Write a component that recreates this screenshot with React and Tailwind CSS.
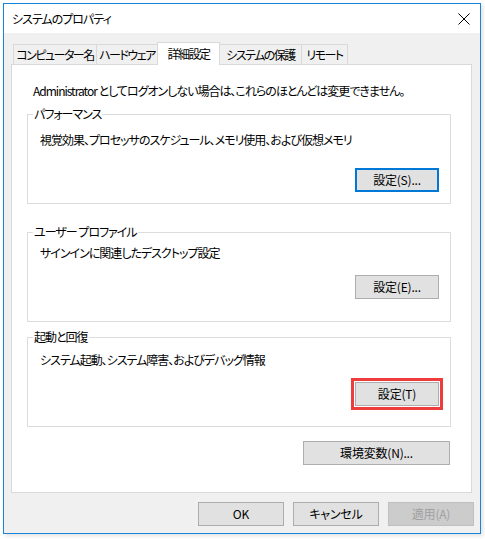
import React from 'react';

const font = "font-['Noto_Sans_CJK_JP','Noto_Sans',sans-serif] [font-feature-settings:'palt'] tracking-[-1px]";

const Button = ({ children, className = '', variant = 'normal' }) => {
  const styles =
    variant === 'default'
      ? 'border-2 border-[#0078d7] bg-[#e1e1e1] text-black'
      : variant === 'disabled'
      ? 'border border-[#bfbfbf] bg-[#cccccc] text-[#a0a0a0]'
      : 'border border-[#adadad] bg-[#e1e1e1] text-black';
  return (
    <div
      className={`flex h-[24px] items-center justify-center whitespace-nowrap text-[12px] leading-none tracking-[-0.2px] ${styles} ${className}`}
    >
      {children}
    </div>
  );
};

const Group = ({ label, text, children, className = '', textPad = 'pt-[17px]', btnGap = 'mt-[20px]' }) => (
  <div className={`relative ml-[15px] flex h-[90px] w-[424px] flex-col border border-[#dcdcdc] ${textPad} ${className}`}>
    {/* label sits on the top border */}
    <span className="absolute left-[5px] top-[-9px] bg-white px-[1px] text-[12px] leading-[16px]">{label}</span>
    <p className="pl-[12px] text-[12px] leading-[16px]">{text}</p>
    <div className={`flex justify-end pr-[11px] ${btnGap}`}>{children}</div>
  </div>
);

const tabs = [
  { name: 'コンピューター名', w: 'w-[84px]' },
  { name: 'ハードウェア', w: 'w-[62px]' },
  { name: '詳細設定', w: 'w-[63px]', active: true },
  { name: 'システムの保護', w: 'w-[83px]' },
  { name: 'リモート', w: 'w-[47px]' },
];

export default function App() {
  return (
    <div className={`h-[539px] w-[485px] bg-white pl-[3px] pt-[3px] text-black ${font}`}>
      <div className="flex h-[531px] w-[478px] flex-col border border-[#1883d7] shadow-[2px_2px_4px_rgba(0,0,0,0.12)]">
        {/* Title bar */}
        <div className="flex h-[29px] items-center justify-between bg-white pl-[8px] pr-[9px]">
          <span className="text-[12px] leading-none">システムのプロパティ</span>
          <svg width="12" height="12" viewBox="0 0 12 12" className="mr-[1px]">
            <path d="M0.5 0.5 L11.5 11.5 M11.5 0.5 L0.5 11.5" stroke="#000" strokeWidth="1" fill="none" />
          </svg>
        </div>

        {/* Body */}
        <div className="flex flex-1 flex-col bg-[#f0f0f0] pt-[9px]">
          {/* Tabs */}
          <div className="ml-[7px] flex h-[22px] items-end pl-[2px]">
            {tabs.map((t, i) => (
              <div
                key={t.name}
                className={`flex items-center justify-center whitespace-nowrap border border-b-0 border-[#d9d9d9] text-[12px] leading-none tracking-[-1.5px] ${t.w} ${
                  i > 0 ? '-ml-px' : ''
                } ${t.active ? 'relative z-10 mb-[-1px] h-[23px] bg-white' : 'h-[20px] bg-[#f0f0f0]'}`}
              >
                {t.name}
              </div>
            ))}
          </div>

          {/* Panel */}
          <div className="ml-[7px] flex h-[429px] w-[461px] flex-col border border-[#d9d9d9] bg-white">
            <p className="mt-[18px] pl-[21px] text-[12px] leading-[16px]">
              Administrator としてログオンしない場合は、これらのほとんどは変更できません。
            </p>

            <Group
              label="パフォーマンス"
              text="視覚効果、プロセッサのスケジュール、メモリ使用、および仮想メモリ"
              className="mt-[15px]"
            >
              <Button variant="default" className="w-[84px]">設定(S)...</Button>
            </Group>

            <Group
              label="ユーザー プロファイル"
              text="サインインに関連したデスクトップ設定"
              className="mt-[28px]"
              textPad="pt-[12px]"
              btnGap="mt-[14px]"
            >
              <Button className="w-[84px]">設定(E)...</Button>
            </Group>

            <Group
              label="起動と回復"
              text="システム起動、システム障害、およびデバッグ情報"
              className="mt-[15px]"
              textPad="pt-[14px]"
              btnGap="mt-[14px]"
            >
              <Button className="w-[84px] outline-3 outline-offset-1 outline-[#ee3b3b]">設定(T)</Button>
            </Group>

            <div className="mt-[14px] flex justify-end pr-[21px]">
              <Button className="w-[147px]">環境変数(N)...</Button>
            </div>
          </div>

          {/* Dialog buttons */}
          <div className="mt-[9px] flex justify-end gap-[9px] pr-[6px]">
            <Button className="w-[86px]">OK</Button>
            <Button className="w-[86px]">キャンセル</Button>
            <Button variant="disabled" className="w-[86px]">適用(A)</Button>
          </div>
        </div>
      </div>
    </div>
  );
}
